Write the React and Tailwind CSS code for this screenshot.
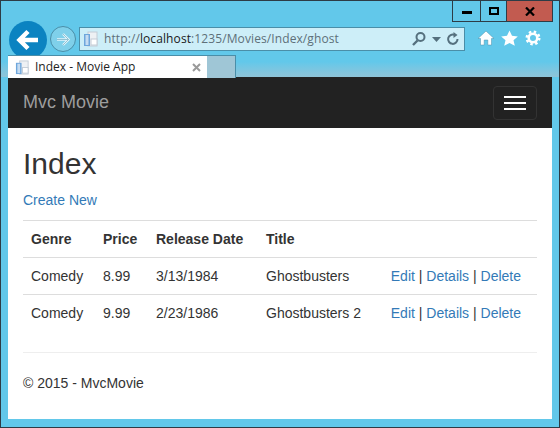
const F = { fontFamily: '"Liberation Sans", Arial, sans-serif' };
const Doc = ({ className = "" }) => (
  <svg viewBox="0 0 16 16" className={className}>
    <rect x="5" y="1" width="9" height="14" fill="#eef1f4" stroke="#c3ccd6" />
    <rect x="1" y="3" width="6" height="12" fill="#6ea6dc" />
    <rect x="2.5" y="4" width="3" height="10" fill="#c6dcf2" />
    <rect x="8" y="8" width="6" height="6" fill="#fff" stroke="#c3ccd6" />
  </svg>
);
const Link = ({ children }) => <a className="text-[#337ab7]">{children}</a>;
const Row = ({ g, p, d, t }) => (
  <tr className="border-t border-[#dddddd] h-[37px]">
    <td className="pl-2">{g}</td>
    <td className="pl-2">{p}</td>
    <td className="pl-2">{d}</td>
    <td className="pl-2">{t}</td>
    <td className="pl-2 text-right pr-4 whitespace-nowrap"><Link>Edit</Link> | <Link>Details</Link> | <Link>Delete</Link></td>
  </tr>
);
export default function App() {
  return (
    <div style={F} className="w-[560px] h-[428px] overflow-hidden border border-[#2d3c46] bg-[#62c8ea] flex flex-col text-[14px] text-[#333333]">
      <div className="h-[76px] shrink-0 relative bg-gradient-to-b from-[#62c8ea] from-80% to-[#8fc4d8]">
        <div className="flex justify-end pr-[6px]">
          <div className="flex h-[21px] border border-[#2d3c46] border-t-0 bg-[#62c8ea]">
            <div className="w-[28px] border-r border-[#2d3c46] flex items-center justify-center pt-[3px]"><div className="w-[10px] h-[3px] bg-black" /></div>
            <div className="w-[26px] border-r border-[#2d3c46] flex items-center justify-center"><div className="w-[10px] h-[8px] border-2 border-black" /></div>
            <div className="w-[45px] bg-[#c25b50] flex items-center justify-center">
              <svg width="10" height="9" viewBox="0 0 10 9"><path d="M1 0.5L9 8.5M9 0.5L1 8.5" stroke="#000" strokeWidth="2.2" /></svg>
            </div>
          </div>
        </div>
        <div className="flex items-start mt-[-1px] pl-[8px]">
          <div className="w-[38px] h-[38px] rounded-full bg-[#0b83c1] flex items-center justify-center shrink-0">
            <svg width="26" height="24" viewBox="0 0 26 24" fill="none"><path d="M23 12H5M13 3.5L4.5 12L13 20.5" stroke="#fff" strokeWidth="4.5" /></svg>
          </div>
          <div className="w-[26px] h-[26px] mt-[5px] ml-[3px] rounded-full border border-[#4a8ea8] bg-[#7fd0ea] flex items-center justify-center shrink-0">
            <svg width="16" height="15" viewBox="0 0 16 15" fill="none"><path d="M2 7.5H13M8 2L13.5 7.5L8 13" stroke="#e4f4fa" strokeWidth="2.4" /><path d="M2 7.5H13M8 2L13.5 7.5L8 13" stroke="#5d9fb8" strokeWidth="0.6" /></svg>
          </div>
          <div className="w-[386px] h-[24px] mt-[6px] ml-[3px] border border-[#4a8ea8] bg-[#cdeef8] flex items-center shrink-0">
            <Doc className="w-[16px] h-[16px] ml-[3px]" />
            <span className="ml-[5px] text-[12px] tracking-[0.1px] text-[#5e7079] flex-1" style={{ fontFamily: '"Open Sans", sans-serif' }}>http://<span className="text-[#1a1a1a]">localhost</span>:1235/Movies/Index/ghost</span>
            <svg width="16" height="16" viewBox="0 0 16 16" fill="none"><circle cx="9.5" cy="6" r="4" stroke="#55707e" strokeWidth="2" /><path d="M6.5 9.5L2 14" stroke="#55707e" strokeWidth="2.4" /></svg>
            <svg width="9" height="5" viewBox="0 0 9 5" className="ml-[5px] mr-[5px]"><path d="M0 0H9L4.5 5Z" fill="#55707e" /></svg>
            <svg width="14" height="14" viewBox="0 0 14 14" fill="none" className="mr-[4px]"><path d="M11.5 7A4.7 4.7 0 1 1 8.5 2.8" stroke="#55707e" strokeWidth="2" /><path d="M7.5 0L11.5 3L7.5 6Z" fill="#55707e" /></svg>
          </div>
          <div className="flex items-center gap-[7px] mt-[9px] ml-[13px]">
            <svg width="16" height="16" viewBox="0 0 16 16"><path d="M8 1L16 8.5H13.5V15H9.8V10H6.2V15H2.5V8.5H0Z" fill="#fff" stroke="#4a8ea8" strokeWidth="0.5" /></svg>
            <svg width="17" height="16" viewBox="0 0 17 16"><path d="M8.5 0.5L11 5.8L16.8 6.4L12.5 10.2L13.8 15.8L8.5 12.9L3.2 15.8L4.5 10.2L0.2 6.4L6 5.8Z" fill="#fff" /></svg>
            <svg width="16" height="16" viewBox="0 0 16 16" fill="none"><circle cx="8" cy="8" r="4.3" stroke="#fff" strokeWidth="2.6" /><circle cx="8" cy="8" r="6.2" stroke="#fff" strokeWidth="2.6" strokeDasharray="2.4 2.47" /></svg>
          </div>
        </div>
        <div className="absolute left-[7px] top-[54px] flex h-[23px] items-stretch">
          <div className="w-[199px] bg-white border-t border-[#4a8ea8] flex items-center">
            <Doc className="w-[15px] h-[15px] ml-[7px]" />
            <span className="ml-[5px] text-[12px] text-[#222222] flex-1" style={{ fontFamily: '"Open Sans", sans-serif' }}>Index - Movie App</span>
            <svg width="9" height="9" viewBox="0 0 9 9" className="mr-[6px]"><path d="M1 1L8 8M8 1L1 8" stroke="#9a9a9a" strokeWidth="2" /></svg>
          </div>
          <div className="w-[29px] bg-[#9fc6d6] border-t border-r border-[#4a8ea8]" />
        </div>
      </div>
      <div className="ml-[7px] mr-[7px] h-[342px] bg-white flex flex-col shadow-[0_-1px_0_#6d7f88]">
        <div className="h-[51px] bg-[#222222] flex items-center justify-between pl-[15px] pr-[15px] shrink-0">
          <span className="text-[18px] text-[#9d9d9d]">Mvc Movie</span>
          <div className="w-[44px] h-[34px] border border-[#333333] rounded-[4px] flex flex-col items-center justify-center gap-[4px]">
            <div className="w-[22px] h-[2px] bg-white" />
            <div className="w-[22px] h-[2px] bg-white" />
            <div className="w-[22px] h-[2px] bg-white" />
          </div>
        </div>
        <div className="px-[15px]">
          <h2 className="text-[30px] leading-[33px] mt-[19px] mb-[10px] font-normal">Index</h2>
          <p className="mb-[10px] leading-[20px]"><Link>Create New</Link></p>
          <table className="w-full border-collapse mb-[20px] text-left">
            <thead>
              <tr className="border-t border-[#dddddd] h-[37px]">
                <th className="pl-2 font-bold w-[72px]">Genre</th>
                <th className="pl-2 font-bold w-[53px]">Price</th>
                <th className="pl-2 font-bold w-[110px]">Release Date</th>
                <th className="pl-2 font-bold">Title</th>
                <th />
              </tr>
            </thead>
            <tbody>
              <Row g="Comedy" p="8.99" d="3/13/1984" t="Ghostbusters" />
              <Row g="Comedy" p="9.99" d="2/23/1986" t="Ghostbusters 2" />
            </tbody>
          </table>
          <hr className="border-t border-[#eeeeee] mt-[20px] mb-[20px]" />
          <p className="leading-[20px]">© 2015 - MvcMovie</p>
        </div>
      </div>
    </div>
  );
}
